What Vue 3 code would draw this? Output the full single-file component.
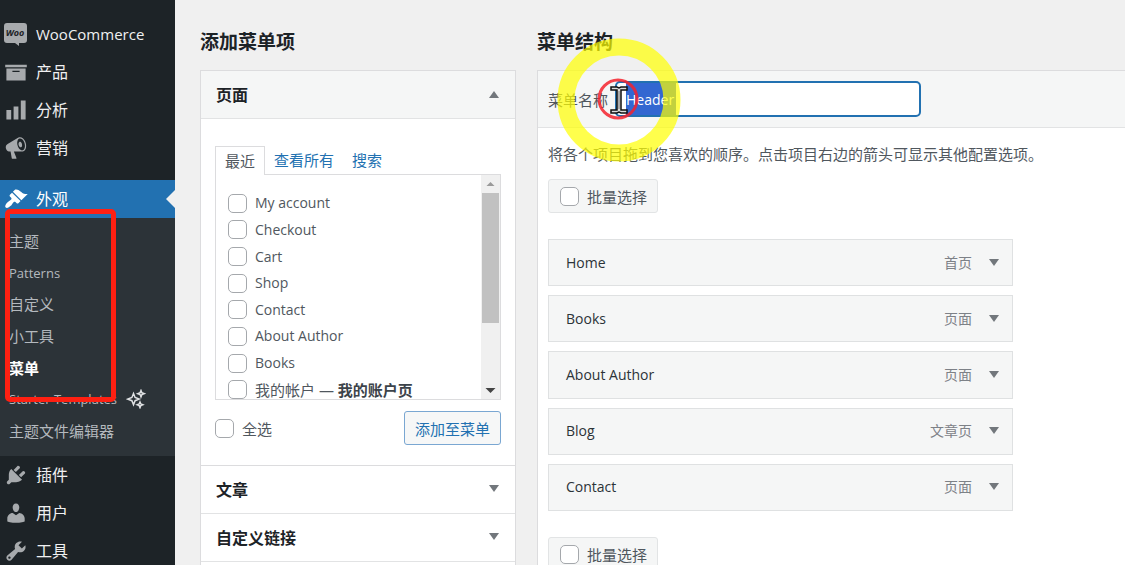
<script setup>
import { onMounted, ref } from 'vue'

const topItems = [
  { label: 'WooCommerce', icon: 'woo' },
  { label: '产品', icon: 'archive' },
  { label: '分析', icon: 'chart' },
  { label: '营销', icon: 'megaphone' }
]
const bottomItems = [
  { label: '插件', icon: 'plugin' },
  { label: '用户', icon: 'user' },
  { label: '工具', icon: 'tool' }
]
const subItems = [
  { label: '主题' },
  { label: 'Patterns', latin: true },
  { label: '自定义' },
  { label: '小工具' },
  { label: '菜单', active: true },
  { label: 'Starter Templates', latin: true, sparkle: true },
  { label: '主题文件编辑器' }
]

const icons = {
  archive: 'M19 4v2H1V4h18zM2 7h16v10H2V7zm11 3V9H7v1h6z',
  chart: 'M18 18V2h-4v16h4zm-6 0V7H8v11h4zm-6 0v-8H2v8h4z',
  megaphone: 'M18.15 5.94c.46 1.62.38 3.22-.02 4.48-.42 1.28-1.26 2.18-2.3 2.48-.16.06-.26.06-.4.06-.06.02-.12.02-.18.02-.06.02-.14.02-.22.02h-6.8l2.22 5.5c.02.14-.06.26-.14.34-.08.1-.24.16-.34.16H6.95c-.1 0-.26-.06-.34-.16-.08-.08-.16-.2-.14-.34l-1-5.5H4.25l-.02-.02c-.5.06-1.08-.18-1.54-.62s-.88-1.08-1.06-1.88c-.24-.8-.2-1.56-.02-2.2.18-.62.58-1.08 1.06-1.3l.02-.02 9-5.4c.1-.06.18-.1.24-.16.06-.04.14-.08.24-.12.16-.08.28-.12.5-.18 1.04-.3 2.24.1 3.22.98s1.84 2.24 2.26 3.86zm-2.58 5.98h-.02c.4-.1.74-.34 1.04-.7.58-.7.86-1.76.86-3.04 0-.64-.1-1.3-.28-1.98-.34-1.36-1.02-2.5-1.78-3.24s-1.68-1.1-2.46-.88c-.82.22-1.4.96-1.7 2-.32 1.04-.28 2.36.06 3.72.38 1.36 1 2.5 1.8 3.24.78.74 1.62 1.1 2.48.88zm-2.54-7.08c.22-.04.42-.02.62.04.38.16.76.48 1.02 1s.42 1.2.42 1.78c0 .3-.04.56-.12.8-.18.48-.44.84-.86.94-.34.1-.8-.06-1.14-.4s-.64-.86-.78-1.5c-.18-.62-.12-1.24.02-1.72s.48-.84.82-.94z',
  brush: 'M14.48 11.06L7.41 3.99l1.5-1.5c.5-.56 2.3-.47 3.51.32 1.21.8 1.43 1.28 2.91 2.1 1.18.64 2.45 1.26 4.45.85zm-.71.71L6.7 4.7 4.93 6.47c-.39.39-.39 1.02 0 1.41l1.06 1.06c.39.39.39 1.03 0 1.42-.6.6-1.43 1.11-2.21 1.69-.35.26-.7.53-1.01.84C1.43 14.23.4 16.08 1.4 17.07c.99 1 2.84-.03 4.18-1.36.31-.31.58-.66.85-1.02.57-.78 1.08-1.61 1.69-2.21.39-.39 1.02-.39 1.41 0l1.06 1.06c.39.39 1.02.39 1.41 0z',
  plugin: 'M13.11 4.36L9.87 7.6 8 5.73l3.24-3.24c.35-.34 1.05-.2 1.56.32.52.51.66 1.21.31 1.55zm-8 1.77l.91-1.12 9.01 9.01-1.19.84c-.71.71-2.63 1.16-3.82 1.16H6.14L4.9 17.26c-.59.59-1.54.59-2.12 0-.59-.58-.59-1.53 0-2.12l1.24-1.24v-3.88c0-1.13.4-3.19 1.09-3.89zm7.26 3.97l3.24-3.24c.34-.35 1.04-.21 1.55.31.52.51.66 1.21.31 1.55l-3.24 3.25z',
  user: 'M10 9.25c-2.27 0-2.73-3.44-2.73-3.44C7 4.02 7.82 2 9.97 2c2.16 0 2.98 2.02 2.71 3.81 0 0-.41 3.44-2.68 3.44zm0 2.57L12.72 10c2.39 0 4.52 2.33 4.52 4.53v2.49s-3.65 1.13-7.24 1.13c-3.65 0-7.24-1.13-7.24-1.13v-2.49c0-2.25 1.94-4.48 4.47-4.48z',
  tool: 'M16.68 9.77c-1.34 1.34-3.3 1.67-4.95.99l-5.41 6.52c-.99.99-2.59.99-3.58 0s-.99-2.59 0-3.57l6.52-5.42c-.68-1.65-.35-3.61.99-4.95 1.28-1.28 3.12-1.62 4.72-1.06l-2.89 2.89 2.82 2.82 2.86-2.87c.53 1.58.18 3.39-1.08 4.65zM3.81 16.21c.4.39 1.04.39 1.43 0 .4-.4.4-1.04 0-1.43-.39-.4-1.03-.4-1.43 0-.39.39-.39 1.03 0 1.43z'
}

const pages = [
  { name: 'My account' },
  { name: 'Checkout' },
  { name: 'Cart' },
  { name: 'Shop' },
  { name: 'Contact' },
  { name: 'About Author' },
  { name: 'Books' },
  { name: '我的帐户 — ', state: '我的账户页' }
]
const menuItems = [
  { name: 'Home', type: '首页' },
  { name: 'Books', type: '页面' },
  { name: 'About Author', type: '页面' },
  { name: 'Blog', type: '文章页' },
  { name: 'Contact', type: '页面' }
]

const menuName = ref('Header')
const nameInput = ref(null)
onMounted(() => {
  nameInput.value.focus()
  nameInput.value.select()
})
</script>

<template>
  <div class="admin">
    <nav class="sidebar" aria-label="主菜单">
      <a v-for="item in topItems" :key="item.label" href="#" class="nav-item" :class="{ latin: item.icon === 'woo' }">
        <svg v-if="item.icon === 'woo'" class="nav-icon" viewBox="0 0 24 24" aria-hidden="true">
          <path d="M3 1h17a3 3 0 0 1 3 3v14a3 3 0 0 1-3 3h-5v3l-4-3H3a3 3 0 0 1-3-3V4a3 3 0 0 1 3-3z" />
          <text x="11" y="14" class="woo-text">Woo</text>
        </svg>
        <svg v-else class="nav-icon" viewBox="0 0 20 20" aria-hidden="true"><path :d="icons[item.icon]" /></svg>
        <span>{{ item.label }}</span>
      </a>
      <a href="#" class="nav-item current">
        <svg class="nav-icon" viewBox="0 0 20 20" aria-hidden="true"><path :d="icons.brush" /></svg>
        <span>外观</span>
      </a>
      <div class="submenu">
        <a v-for="item in subItems" :key="item.label" href="#" :class="{ active: item.active, latin: item.latin }">
          {{ item.label }}
          <svg v-if="item.sparkle" class="sparkle" viewBox="0 0 20 20" aria-hidden="true">
            <path d="M7.500 4.500l1.600 4 4 1.600-4 1.600-1.600 4-1.600-4-4-1.600 4-1.600z" />
            <path d="M15 1.500l.9 2.300 2.300.9-2.300.9-.9 2.300-.9-2.300-2.300-.9 2.300-.9z" />
            <path d="M14 13l.8 2 2 .8-2 .8-.8 2-.8-2-2-.8 2-.8z" />
          </svg>
        </a>
        <div class="highlight-box"></div>
      </div>
      <a v-for="item in bottomItems" :key="item.label" href="#" class="nav-item">
        <svg class="nav-icon" viewBox="0 0 20 20" aria-hidden="true"><path :d="icons[item.icon]" /></svg>
        <span>{{ item.label }}</span>
      </a>
    </nav>

    <main class="content">
      <section class="add-items">
        <h2>添加菜单项</h2>
        <div class="accordion">
          <button type="button" class="acc-head open">
            页面
            <svg class="arrow" viewBox="0 0 10 8" aria-hidden="true"><path d="M5 1l5 7H0z" /></svg>
          </button>
          <div class="acc-body">
            <div class="tabs">
              <a href="#" class="tab selected">最近</a>
              <a href="#" class="tab">查看所有</a>
              <a href="#" class="tab">搜索</a>
            </div>
            <div class="tab-panel">
              <ul>
                <li v-for="page in pages" :key="page.name">
                  <label :class="{ cjk: page.state }"><input type="checkbox" />
                    <span>{{ page.name }}<strong v-if="page.state">{{ page.state }}</strong></span>
                  </label>
                </li>
              </ul>
              <div class="scrollbar" aria-hidden="true">
                <svg viewBox="0 0 18 18"><path d="M5 11l4-4 4 4z" fill="#9a9a9a" /></svg>
                <div class="thumb"></div>
                <svg viewBox="0 0 18 18"><path d="M4 7l5 5 5-5z" fill="#444" /></svg>
              </div>
            </div>
            <div class="panel-actions">
              <label><input type="checkbox" /><span>全选</span></label>
              <button type="button" class="add-button">添加至菜单</button>
            </div>
          </div>
          <button v-for="label in ['文章', '自定义链接']" :key="label" type="button" class="acc-head">
            {{ label }}
            <svg class="arrow" viewBox="0 0 10 8" aria-hidden="true"><path d="M0 0h10L5 7z" /></svg>
          </button>
        </div>
      </section>

      <section class="structure">
        <h2>菜单结构</h2>
        <div class="panel">
          <div class="panel-head">
            <label for="menu-name">菜单名称</label>
            <input id="menu-name" ref="nameInput" v-model="menuName" type="text" />
            <svg class="pointer" viewBox="0 0 124 124" aria-hidden="true">
              <circle cx="62" cy="62" r="53" fill="none" stroke="#ffff00" stroke-opacity=".7" stroke-width="17" />
              <circle cx="61" cy="61" r="19" fill="none" stroke="#f5222d" stroke-opacity=".85" stroke-width="3" />
              <path d="M54 49h6l2 1 2-1h6v3h-6v20h6v3h-6l-2-1-2 1h-6v-3h6V52h-6z" fill="#ddd" stroke="#111" stroke-width="1.500" />
              <path d="M62 53v18" stroke="#777" />
            </svg>
          </div>
          <div class="panel-body">
            <p>将各个项目拖到您喜欢的顺序。点击项目右边的箭头可显示其他配置选项。</p>
            <label class="bulk"><input type="checkbox" /><span>批量选择</span></label>
            <ul class="menu-list">
              <li v-for="item in menuItems" :key="item.name">
                <span class="item-name">{{ item.name }}</span>
                <span class="item-type">{{ item.type }}</span>
                <button type="button" :aria-label="'编辑 ' + item.name">
                  <svg class="arrow" viewBox="0 0 10 8" aria-hidden="true"><path d="M0 0h10L5 7z" /></svg>
                </button>
              </li>
            </ul>
            <label class="bulk"><input type="checkbox" /><span>批量选择</span></label>
          </div>
        </div>
      </section>
    </main>
  </div>
</template>

<style>
body {
  background: #f0f0f0;
  overflow: hidden;
}
</style>

<style scoped>
.admin {
  display: flex;
  height: 100vh;
  overflow: hidden;
  font-family: "Open Sans", "Noto Sans CJK SC", sans-serif;
  font-size: 14px;
  color: #50575e;
}
.admin *,
.admin *::before {
  box-sizing: border-box;
}
a {
  text-decoration: none;
}
button,
input {
  font-family: inherit;
}
ul {
  list-style: none;
  margin: 0;
  padding: 0;
}

.sidebar {
  flex: 0 0 175px;
  padding-top: 15px;
  background: #1d2327;
}
.nav-item {
  display: flex;
  align-items: center;
  gap: 8px;
  height: 38px;
  padding-left: 4px;
  color: #f0f0f1;
  font-size: 16px;
  line-height: 38px;
}
.nav-item.latin {
  font-size: 15px;
}
.nav-icon {
  width: 24px;
  height: 24px;
  fill: #a7aaad;
}
.woo-text {
  fill: #1d2327;
  font-size: 9px;
  font-weight: 700;
  font-style: italic;
  text-anchor: middle;
}
.current {
  position: relative;
  margin-top: 13px;
  background: #2271b1;
  color: #fff;
}
.current .nav-icon {
  fill: #fff;
}
.current::before {
  content: "";
  position: absolute;
  right: 0;
  top: 10px;
  border: 9px solid transparent;
  border-left: 0;
  border-right-color: #f0f0f0;
}
.submenu {
  position: relative;
  display: grid;
  grid-auto-rows: 1fr;
  height: 238px;
  padding: 7px 0 9px;
  background: #2c3338;
}
.submenu a {
  display: flex;
  align-items: center;
  gap: 9px;
  padding-left: 9px;
  color: #b4b9be;
  font-size: 15px;
  line-height: 20px;
  white-space: nowrap;
}
.submenu a.latin {
  font-size: 13px;
}
.submenu a.active {
  color: #fff;
  font-weight: 700;
}
.sparkle {
  width: 20px;
  height: 20px;
  fill: none;
  stroke: #e0e2e4;
  stroke-width: 1.5;
}
.highlight-box {
  position: absolute;
  left: 5px;
  top: -9px;
  width: 111px;
  height: 193px;
  border: 5px solid #ff2012;
  border-radius: 5px;
}

.content {
  flex: 1;
  min-width: 0;
  display: flex;
  gap: 21px;
  padding: 28px 0 0 25px;
}
h2 {
  margin: 0 0 14px;
  color: #1d2327;
  font-size: 19px;
  font-weight: 700;
  line-height: 28px;
}
.add-items {
  flex: 0 0 316px;
}
.accordion {
  padding-bottom: 48px;
  border: 1px solid #dcdcde;
  background: #fff;
}
.acc-head {
  display: flex;
  align-items: center;
  justify-content: space-between;
  width: 100%;
  height: 48px;
  padding: 0 16px 2px 15px;
  border: 0;
  border-bottom: 1px solid #e2e3e4;
  background: #fff;
  color: #1d2327;
  font-size: 16px;
  font-weight: 700;
}
.acc-head.open {
  background: #f5f6f6;
}
.arrow {
  width: 10px;
  height: 8px;
  fill: #72777c;
}
.acc-body {
  padding: 27px 14px 20px;
  border-bottom: 1px solid #dcdcde;
}
.tabs {
  display: flex;
  font-size: 15px;
}
.tab {
  height: 28px;
  padding: 0 9px;
  color: #2271b1;
  line-height: 28px;
}
.tab.selected {
  position: relative;
  height: 29px;
  margin-bottom: -1px;
  border: 1px solid #dcdcde;
  border-bottom: 0;
  background: #fff;
  color: #50575e;
}
.tab-panel {
  display: flex;
  height: 226px;
  border: 1px solid #dcdcde;
  overflow: hidden;
}
.tab-panel ul {
  flex: 1;
  display: grid;
  grid-auto-rows: 1fr;
  height: 213px;
  margin-top: 15px;
  padding-left: 12px;
}
label {
  display: flex;
  align-items: center;
}
.tab-panel label {
  gap: 8px;
  height: 100%;
  line-height: 20px;
  white-space: nowrap;
}
.tab-panel label.cjk {
  font-size: 15px;
}
strong {
  color: #3c434a;
}
input[type="checkbox"] {
  appearance: none;
  flex: none;
  width: 19px;
  height: 19px;
  margin: 0;
  border: 1px solid #a5a8ac;
  border-radius: 5px;
  background: #fff;
}
.scrollbar {
  display: flex;
  flex-direction: column;
  width: 19px;
  background: #f0f0f0;
}
.scrollbar svg {
  height: 18px;
}
.scrollbar svg:last-child {
  margin-top: auto;
}
.thumb {
  height: 130px;
  margin: 0 1px;
  background: #c1c1c1;
}
.panel-actions {
  display: flex;
  align-items: center;
  justify-content: space-between;
  margin-top: 11px;
  font-size: 15px;
}
.panel-actions label {
  gap: 8px;
}
.add-button {
  height: 34px;
  padding: 0 10px;
  border: 1px solid #7aa7d2;
  border-radius: 3px;
  background: #f6f7f7;
  color: #2271b1;
  font-size: 15px;
}

.structure {
  flex: 1;
  min-width: 0;
}
.panel {
  border: 1px solid #dcdcde;
  border-right: 0;
  background: #fff;
}
.panel-head {
  position: relative;
  display: flex;
  align-items: center;
  gap: 7px;
  height: 57px;
  padding-left: 10px;
  border-bottom: 1px solid #e2e3e4;
  background: #f5f6f6;
  font-size: 15px;
}
#menu-name {
  width: 306px;
  height: 36px;
  padding: 0 9px;
  border: 2px solid #2271b1;
  border-radius: 5px;
  outline: 0;
  background: linear-gradient(#3367d1, #3367d1) 9px 0 / 50px 100% no-repeat #fff;
  color: #2c3338;
  font-size: 14px;
}
#menu-name::selection {
  background: transparent;
  color: #fff;
}
.pointer {
  position: absolute;
  left: 19px;
  top: -33px;
  width: 124px;
  height: 124px;
  pointer-events: none;
}
.panel-body {
  padding: 15px 10px 40px;
}
p {
  margin: 0 0 14px;
  font-size: 15px;
  line-height: 22px;
  white-space: nowrap;
}
.bulk {
  gap: 8px;
  width: max-content;
  height: 34px;
  padding: 0 10px 0 11px;
  border: 1px solid #e2e4e5;
  border-radius: 3px;
  background: #f5f6f6;
  font-size: 15px;
}
.menu-list {
  display: grid;
  grid-auto-rows: 1fr;
  gap: 9px;
  max-width: 465px;
  height: 272px;
  margin: 26px 0;
}
.menu-list li {
  display: flex;
  align-items: center;
  padding: 0 13px 0 17px;
  border: 1px solid #dfe1e2;
  background: #f5f6f6;
  line-height: 20px;
}
.item-name {
  flex: 1;
  color: #2c3338;
  font-weight: 500;
}
.item-type {
  color: #7d8187;
}
.menu-list button {
  display: flex;
  margin-left: 17px;
  padding: 0;
  border: 0;
  background: none;
}
</style>
